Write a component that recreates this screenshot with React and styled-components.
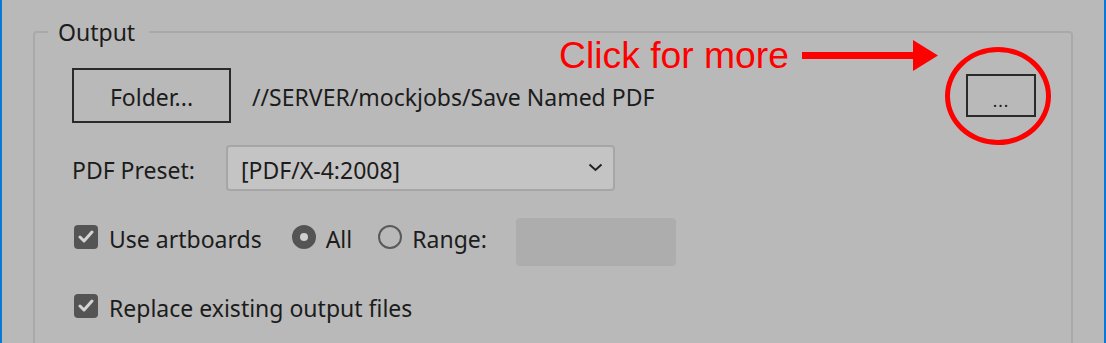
import React from "react";
import styled, { createGlobalStyle } from "styled-components";

const GlobalStyle = createGlobalStyle`
  html, body {
    margin: 0;
    padding: 0;
    background: #b9b9b9;
  }
  body {
    font-family: "Noto Sans", "Open Sans", sans-serif;
    color: #1c1c1c;
  }
`;

const Frame = styled.div`
  position: relative;
  height: 343px;
  overflow: hidden;
  box-sizing: border-box;
  border-left: 2px solid #0a78d7;
  border-right: 2px solid #0a78d7;
  padding: 20px 31px 0 31px;
  font-size: 23px;
`;

const Group = styled.fieldset`
  margin: 0;
  padding: 0;
  border: 2px solid #a9a9a9;
  border-radius: 4px;
  min-width: 0;
`;

const Legend = styled.legend`
  margin-left: 13px;
  padding: 0 14px 0 10px;
  line-height: 24px;
`;

const Body = styled.div`
  padding: 24px 35px 40px 37px;
`;

const Row = styled.div`
  display: flex;
  align-items: center;
  height: ${(p) => p.$h}px;
  margin-top: ${(p) => p.$mt || 0}px;
`;

const Button = styled.button`
  font: inherit;
  color: inherit;
  background: transparent;
  border: 2px solid #2a2a2a;
  border-radius: 0;
  box-sizing: border-box;
  width: ${(p) => p.$w}px;
  height: ${(p) => p.$h}px;
  padding: 2px 0 0;
  display: flex;
  align-items: center;
  justify-content: center;
  flex: none;
`;

const Path = styled.span`
  margin-left: 21px;
  padding-top: 3px;
`;

const MoreWrap = styled.div`
  position: relative;
  margin-left: auto;
  margin-top: -1px;
`;

const Dots = styled.span`
  font-size: 17px;
  letter-spacing: 1px;
  margin-top: 8px;
`;

const Ring = styled.div`
  position: absolute;
  left: -21px;
  top: -27px;
  width: 106px;
  height: 98px;
  box-sizing: border-box;
  border: 5px solid #ff0000;
  border-radius: 50%;
  pointer-events: none;
`;

const Label = styled.span`
  width: ${(p) => p.$w}px;
  flex: none;
  padding-top: 4px;
`;

const Select = styled.div`
  width: 389px;
  height: 46px;
  box-sizing: border-box;
  border: 2px solid #a6a6a6;
  border-radius: 4px;
  background: #c4c4c4;
  display: flex;
  align-items: center;
  justify-content: space-between;
  padding: 3px 10px 0 13px;
  svg {
    margin-top: -5px;
  }
`;

const Box = styled.span`
  width: 24px;
  height: 24px;
  border-radius: 4px;
  background: #545454;
  display: flex;
  align-items: center;
  justify-content: center;
  flex: none;
  margin-left: 2px;
`;

const Radio = styled.span`
  width: 24px;
  height: 24px;
  box-sizing: border-box;
  border-radius: 50%;
  flex: none;
  display: flex;
  align-items: center;
  justify-content: center;
  margin-left: ${(p) => p.$ml || 0}px;
  background: ${(p) => (p.$on ? "#545454" : "transparent")};
  border: 2px solid ${(p) => (p.$on ? "#545454" : "#5a5a5a")};
  &::after {
    content: "";
    display: ${(p) => (p.$on ? "block" : "none")};
    width: 8px;
    height: 8px;
    border-radius: 50%;
    background: #cfcfcf;
  }
`;

const Text = styled.span`
  margin-left: ${(p) => p.$ml || 0}px;
  padding-top: 4px;
  white-space: nowrap;
`;

const RangeField = styled.div`
  width: 160px;
  height: 48px;
  flex: none;
  align-self: flex-start;
  border-radius: 4px;
  background: #adadad;
  margin-left: ${(p) => p.$ml || 0}px;
`;

const Annotation = styled.div`
  position: absolute;
  left: 557px;
  top: 37px;
  display: flex;
  align-items: center;
  gap: 13px;
  color: #ff0000;
  font-family: "Liberation Sans", Arial, sans-serif;
  font-size: 37.3px;
  line-height: 1;
`;

const Check = () => (
  <svg width="16" height="14" viewBox="0 0 16 14">
    <polyline
      points="2,7 6,11 14,2"
      fill="none"
      stroke="#d4d4d4"
      strokeWidth="3"
      strokeLinecap="round"
      strokeLinejoin="round"
    />
  </svg>
);

const Chevron = () => (
  <svg width="15" height="9" viewBox="0 0 15 9">
    <polyline
      points="1.5,1.5 7.5,7 13.5,1.5"
      fill="none"
      stroke="#222"
      strokeWidth="2"
    />
  </svg>
);

const Arrow = () => (
  <svg width="136" height="31" viewBox="0 0 136 31">
    <rect x="0" y="12" width="112" height="7" fill="#ff0000" />
    <polygon points="111,0 136,15.5 111,31" fill="#ff0000" />
  </svg>
);

export default function App() {
  return (
    <Frame>
      <GlobalStyle />
      <Group>
        <Legend>Output</Legend>
        <Body>
          <Row $h={55}>
            <Button $w={159} $h={55}>
              Folder...
            </Button>
            <Path>//SERVER/mockjobs/Save Named PDF</Path>
            <MoreWrap>
              <Button $w={70} $h={43}>
                <Dots>...</Dots>
              </Button>
              <Ring />
            </MoreWrap>
          </Row>
          <Row $h={46} $mt={22}>
            <Label $w={154}>PDF Preset:</Label>
            <Select>
              <span>[PDF/X-4:2008]</span>
              <Chevron />
            </Select>
          </Row>
          <Row $h={38} $mt={27}>
            <Box>
              <Check />
            </Box>
            <Text $ml={11}>Use artboards</Text>
            <Radio $on $ml={30} />
            <Text $ml={10}>All</Text>
            <Radio $ml={26} />
            <Text $ml={10}>Range:</Text>
            <RangeField $ml={29} />
          </Row>
          <Row $h={24} $mt={38}>
            <Box>
              <Check />
            </Box>
            <Text $ml={11}>Replace existing output files</Text>
          </Row>
        </Body>
      </Group>
      <Annotation>
        <span>Click for more</span>
        <Arrow />
      </Annotation>
    </Frame>
  );
}
